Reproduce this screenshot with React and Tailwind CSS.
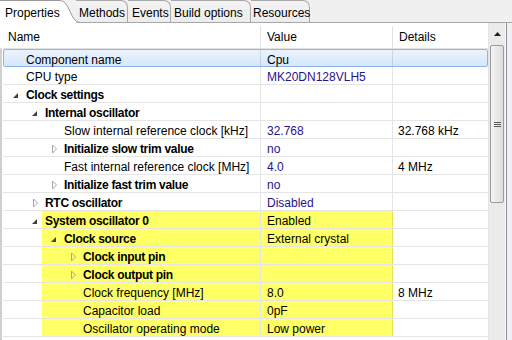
import React from 'react';

const rows = [
    { name: 'Component name', level: 0, value: 'Cpu', selected: true },
    { name: 'CPU type', level: 0, value: 'MK20DN128VLH5', blue: true },
    { name: 'Clock settings', level: 0, bold: true, exp: 'open' },
    { name: 'Internal oscillator', level: 1, bold: true, exp: 'open' },
    { name: 'Slow internal reference clock [kHz]', level: 2, value: '32.768', blue: true, details: '32.768 kHz' },
    { name: 'Initialize slow trim value', level: 2, bold: true, exp: 'closed', value: 'no', blue: true },
    { name: 'Fast internal reference clock [MHz]', level: 2, value: '4.0', blue: true, details: '4 MHz' },
    { name: 'Initialize fast trim value', level: 2, bold: true, exp: 'closed', value: 'no', blue: true },
    { name: 'RTC oscillator', level: 1, bold: true, exp: 'closed', value: 'Disabled', blue: true },
    { name: 'System oscillator 0', level: 1, bold: true, exp: 'open', value: 'Enabled', hl: true },
    { name: 'Clock source', level: 2, bold: true, exp: 'open', value: 'External crystal', hl: true },
    { name: 'Clock input pin', level: 3, bold: true, exp: 'closed', hl: true },
    { name: 'Clock output pin', level: 3, bold: true, exp: 'closed', hl: true },
    { name: 'Clock frequency [MHz]', level: 3, value: '8.0', details: '8 MHz', hl: true },
    { name: 'Capacitor load', level: 3, value: '0pF', hl: true },
    { name: 'Oscillator operating mode', level: 3, value: 'Low power', hl: true },
];

const indent = ['pl-[23px]', 'pl-[42px]', 'pl-[61px]', 'pl-[80px]'];

const tabs = [
    { label: 'Methods', w: 'w-[52px]', pl: 'pl-[3px]' },
    { label: 'Events', w: 'w-[43px]', pl: 'pl-[4px]' },
    { label: 'Build options', w: 'w-[80px]', pl: 'pl-[3px]' },
    { label: 'Resources', w: 'w-[59px]', pl: 'pl-[2px]' },
];

const Expander = ({ state }) => {
    if (state === 'open') {
        return (
            <svg width="7" height="7" viewBox="0 0 7 7" className="absolute -left-[14px] top-[3px]">
                <path d="M6 1 L6 6 L1 6 Z" fill="#404040" />
            </svg>
        );
    }
    return (
        <svg width="7" height="10" viewBox="0 0 7 10" className="absolute -left-[13px] top-[1px]">
            <path d="M1.5 1 L5.5 5 L1.5 9 Z" fill="none" stroke="#a6a6a6" strokeWidth="1" />
        </svg>
    );
};

const Row = ({ row }) => {
    const nameBg = row.hl ? 'bg-[linear-gradient(to_right,transparent_39px,#ffff66_39px)]' : '';
    return (
        <div
            className={`relative flex h-[18px] ${
                row.selected
                    ? 'border border-[#8fb5e6] rounded-[2px] bg-gradient-to-b from-[#eaf3fd] to-[#d6e7fb]'
                    : 'border-b border-black/10'
            }`}
        >
            <div className={`w-[258px] shrink-0 h-full border-r border-black/10 ${nameBg} ${row.selected ? '-ml-px' : ''}`}>
                <div className={`${indent[row.level]} h-full flex items-center pt-[3px]`}>
                    <span className={`relative leading-none ${row.bold ? 'font-bold tracking-[-0.3px]' : ''}`}>
                        {row.exp && <Expander state={row.exp} />}
                        {row.name}
                    </span>
                </div>
            </div>
            <div
                className={`w-[132px] shrink-0 h-full border-r border-black/10 flex items-center pl-[6px] pt-[3px] leading-none ${
                    row.hl ? 'bg-[#ffff66]' : ''
                } ${row.blue ? 'text-[#26138e]' : 'text-black'}`}
            >
                {row.value}
            </div>
            <div className="flex-1 h-full flex items-center pl-[5px] pt-[3px] leading-none">{row.details}</div>
        </div>
    );
};

export default function App() {
    return (
        <div
            className="w-[512px] h-[340px] overflow-hidden bg-[#f0f0f0] text-[12px] text-black"
            style={{ fontFamily: "'Liberation Sans', Arial, sans-serif" }}
        >
            {/* tab strip */}
            <div className="flex h-[23px]">
                <div className="relative z-10 flex h-[23px]">
                    <div className="w-[60px] h-[23px] bg-white border-t border-[#9a9a9a] pl-[5px] pt-[3px]">
                        Properties
                    </div>
                    <svg width="20" height="23" viewBox="0 0 20 23">
                        <path d="M0 0.5 C10 0.5 10 22.5 20 22.5 L0 23 Z" fill="#ffffff" />
                        <path d="M0 0.5 C10 0.5 10 22.5 20 22.5" fill="none" stroke="#9a9a9a" />
                    </svg>
                </div>
                <div className="flex -ml-[4px]">
                    {tabs.map((t) => (
                        <div
                            key={t.label}
                            className={`${t.w} ${t.pl} h-[23px] pt-[3px] border-t border-r border-b border-[#a7a7a7] rounded-tr-[7px] bg-gradient-to-b from-[#f4f4f4] to-[#ececec] whitespace-nowrap`}
                        >
                            {t.label}
                        </div>
                    ))}
                </div>
                <div className="flex-1 border-b border-[#a7a7a7]" />
            </div>

            {/* grid + scrollbar */}
            <div className="flex h-[317px]">
                <div className="w-[488px] bg-white">
                    <div className="flex h-[26px] border-b border-[#e2e2e2] pt-[3px]">
                        <div className="w-[261px] border-r border-[#e2e2e2] pl-[8px] flex items-center">Name</div>
                        <div className="w-[132px] border-r border-[#e2e2e2] pl-[6px] flex items-center">Value</div>
                        <div className="flex-1 pl-[6px] flex items-center">Details</div>
                    </div>
                    <div className="h-[291px] border-l-2 border-[#d0d0d0] pl-px">
                        {rows.map((r) => (
                            <Row key={r.name} row={r} />
                        ))}
                    </div>
                </div>
                <div className="w-[17px] bg-[#ebebeb] border-l border-[#e4e4e4] flex flex-col">
                    <div className="h-[22px] flex items-center justify-center">
                        <svg width="7" height="4" viewBox="0 0 7 4">
                            <path d="M0 4 L3.5 0 L7 4 Z" fill="#202020" />
                        </svg>
                    </div>
                    <div className="mx-px h-[158px] rounded-[2px] border border-[#9a9a9a] bg-gradient-to-r from-[#f6f6f6] to-[#dcdcdc] flex flex-col items-center justify-center gap-px">
                        <div className="w-[7px] h-px bg-[#5a5a5a]" />
                        <div className="w-[7px] h-px bg-[#5a5a5a]" />
                        <div className="w-[7px] h-px bg-[#5a5a5a]" />
                    </div>
                </div>
                <div className="w-px bg-[#fafafa]" />
                <div className="w-px bg-[#8e8c9c]" />
            </div>
        </div>
    );
}
